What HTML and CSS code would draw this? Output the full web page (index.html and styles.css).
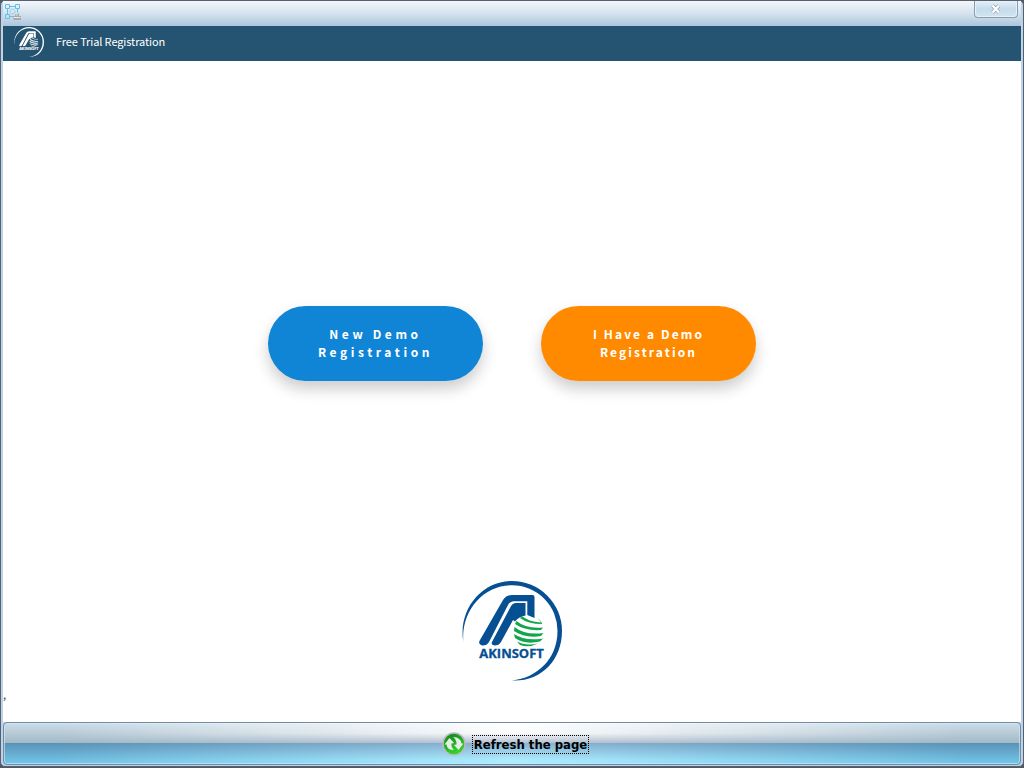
FILE: index.html
```
<!DOCTYPE html>
<html lang="en">
<head>
    <meta charset="UTF-8">
    <title>Free Trial Registration</title>
    <link rel="stylesheet" href="styles.css">
</head>
<body>
    <div class="window">
        <div class="titlebar">
            <svg class="app-icon" width="17" height="17" viewBox="0 0 17 17">
                <g fill="none" stroke="#62c1e6">
                    <path d="M.5.500h4v4h-4zM10.500.500h4v4h-4zM.500 10.500h4v4h-4zM4.500 2.500h6M2.500 4.500v6M12.500 4.500v4M4.500 12.500h4"/>
                    <circle cx="7.500" cy="7.500" r="2.500" stroke-dasharray="1.500 1"/>
                </g>
                <path d="M8.500 12h7.500v4H8.500zM10 10.500h1.500V12H10zM12.500 9.500H14V12h-1.500z" fill="#a5aaae"/>
                <path d="M9 13.500h6.500" stroke="#e8edf0"/>
            </svg>
            <button class="close" aria-label="Close">
                <svg width="12" height="10" viewBox="0 0 12 10">
                    <path d="M2.500 1.500L9 8.500M9 1.500L2.500 8.500" stroke="#8fa0b0" stroke-width="3.600"/>
                    <path d="M2.500 1.500L9 8.500M9 1.500L2.500 8.500" stroke="#fff" stroke-width="2.300"/>
                </svg>
            </button>
        </div>
        <div class="header">
            <svg class="header-logo" width="30" height="30" viewBox="0 0 100 100"><use href="#logo"/></svg>
            <span>Free Trial Registration</span>
        </div>
        <div class="content">
            <div class="buttons">
                <button class="btn btn-new">New Demo<br>Registration</button>
                <button class="btn btn-have">I Have a Demo<br>Registration</button>
            </div>
            <svg class="logo" width="100" height="100" viewBox="0 0 100 100">
                <g id="logo">
                    <path class="mark" d="M1.300 61C-4 28 20 0 50 0A50 50 0 0 1 100 50C100 80 78 101 50 99.500C75 97 95.500 78 95.500 50A45.500 45.500 0 0 0 50 4.300C22 4.300-1 29 1.300 61Z"/>
                    <path class="mark" d="M18 59L41 19Q44 14 50 14H70.500Q72.500 14 72.500 16V37L65.300 34V20.300H52Q48 20.300 46 24L27 61Q25 64.500 20.500 64.500Q15.500 63 18 59Z"/>
                    <path class="mark" d="M30.500 60L48.500 26Q50.500 22 54 22H63.500V34.500Q57 35.500 53 40.500L51 39L39 61Q37 64.500 32.500 64.500Q28 63.500 30.500 60Z"/>
                    <path class="globe" d="M60 35Q66 40.500 79 41.500Q77 37 71 35Q79 38 80 43Q66 43 58 37ZM54.500 40Q64 48 81 46.500L79 49Q63 50 53 43ZM52.500 46Q63 54.500 81.500 52L79 55Q63 57.500 52 50ZM52 53Q63 60.500 81 57.500L78 60.500Q63 64 53 57ZM55 60.500Q63 65 76 62.500Q67 67 58 64Z"/>
                    <text class="mark" x="17.300" y="76.700" textLength="64.500" lengthAdjust="spacingAndGlyphs">AKINSOFT</text>
                </g>
            </svg>
            <span class="stray">,</span>
        </div>
        <button class="refresh">
            <svg width="24" height="24" viewBox="0 0 24 24">
                <defs>
                    <linearGradient id="green" x1="0" y1="0" x2=".4" y2="1">
                        <stop offset="0" stop-color="#137f20"/>
                        <stop offset="1" stop-color="#35d22b"/>
                    </linearGradient>
                </defs>
                <circle cx="12" cy="12" r="11.800" fill="#b9bdbf"/>
                <circle cx="12" cy="12" r="10.300" fill="url(#green)"/>
                <g fill="#e6ede6">
                    <path d="M7.500 6L12 11L9.500 11.500Q9 15 12 18Q5 18 4.500 12.500L2.500 12.500Z"/>
                    <path d="M16.500 18L12 13L14.500 12.500Q15 8 11 5Q18.500 5 19.500 11.500L21.500 11.500Z"/>
                </g>
            </svg>
            <span>Refresh the page</span>
        </button>
    </div>
</body>
</html>
```
FILE: styles.css
```
* {
    box-sizing: border-box;
}
body {
    margin: 0;
    height: 768px;
    overflow: hidden;
    background-color: #4d5965;
    font-family: "Noto Sans CJK SC", sans-serif;
}
button {
    padding: 0;
    border: none;
}
.window {
    display: flex;
    flex-direction: column;
    height: 767px;
    border: 1px solid #55616e;
    border-radius: 5px;
    padding: 0 2px 1px;
    background-color: #bcd3e8;
}
.titlebar {
    display: flex;
    justify-content: space-between;
    height: 25px;
    padding: 0 3px 0 2px;
    background: linear-gradient(#f4f7fb, #d5e2ee 50%, #abc6dc);
}
.app-icon {
    margin-top: 3px;
}
.close {
    display: flex;
    justify-content: center;
    align-items: center;
    width: 44px;
    height: 17px;
    border: 1px solid #8b9cae;
    border-top: none;
    border-radius: 0 0 4px 4px;
    background: linear-gradient(#e6eff7, #c5dcec 50%, #d2e5f2);
    box-shadow: inset 0 0 0 1px #e6f0f8;
}
.header {
    --mark: #fff;
    --globe: #fff;
    display: flex;
    align-items: center;
    gap: 12px;
    height: 35px;
    padding: 0 0 3px 11px;
    background-color: #255472;
    color: #fff;
    font-size: 11px;
    line-height: 16px;
    letter-spacing: -0.1px;
}
.header span {
    margin-bottom: 2px;
}
.content {
    --mark: #064f92;
    --globe: #12a64c;
    flex: 1;
    display: flex;
    flex-direction: column;
    align-items: center;
    padding-top: 245px;
    background-color: #fff;
}
.buttons {
    display: flex;
    gap: 58px;
}
.btn {
    width: 215px;
    height: 75px;
    padding-bottom: 2px;
    border-radius: 38px;
    color: #fff;
    font-family: inherit;
    font-size: 12px;
    font-weight: 700;
    line-height: 18px;
    box-shadow: 0 8px 15px rgba(0, 0, 0, 0.2);
}
.btn-new {
    background-color: #1085d6;
    letter-spacing: 3.6px;
}
.btn-have {
    background-color: #ff8a00;
    letter-spacing: 2.1px;
}
.logo {
    margin-top: 200px;
}
.mark {
    fill: var(--mark);
}
.globe {
    fill: var(--globe);
}
#logo text {
    font-family: "Open Sans", sans-serif;
    font-size: 12px;
    font-weight: 700;
    stroke: var(--mark);
    stroke-width: 0.3px;
}
.stray {
    align-self: flex-start;
    margin-top: 5px;
    color: #335;
    font-size: 11px;
    line-height: 16px;
}
.refresh {
    position: relative;
    display: flex;
    justify-content: center;
    align-items: center;
    gap: 6px;
    height: 43px;
    padding-left: 7px;
    border: 1px solid #7588a6;
    border-radius: 4px;
    background: linear-gradient(#cbdce7, #a2b9c7 49%, #5b93b8 50%, #73c8ea);
    box-shadow: inset 0 0 0 1px rgba(210, 235, 250, 0.6);
    color: #000;
    font-family: "DejaVu Sans Condensed", "DejaVu Sans", sans-serif;
    font-size: 13px;
    font-weight: 700;
}
/* glow in the middle of the bar, fading out to both ends */
.refresh::before {
    content: "";
    position: absolute;
    inset: 0;
    background: linear-gradient(#fff, #fbfbfc 25%, #b4bfd0 49%, #8fb5d3 50%, #aeecff 90%);
    -webkit-mask-image: linear-gradient(90deg, transparent 5%, #000 50%, transparent 95%);
    mask-image: linear-gradient(90deg, transparent 5%, #000 50%, transparent 95%);
}
.refresh svg,
.refresh span {
    position: relative;
}
.refresh span {
    margin-top: 2px;
    border: 1px dotted #000;
    padding: 1px 1px 0;
    line-height: 16px;
}
```
